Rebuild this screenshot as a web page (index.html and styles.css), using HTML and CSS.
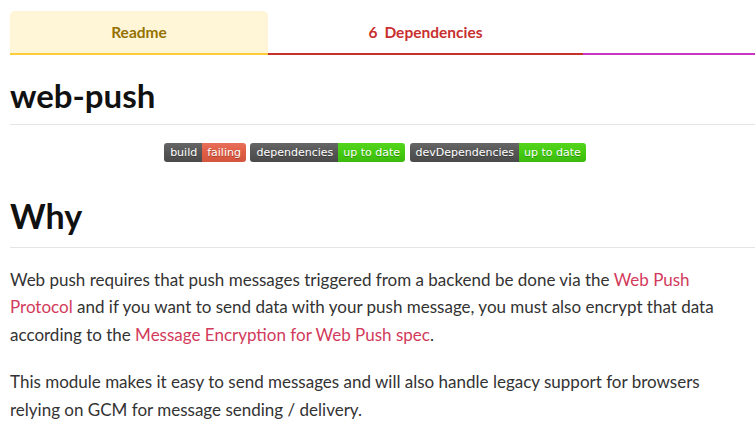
FILE: index.html
```html
<!DOCTYPE html>
<html>
<head>
<meta charset="utf-8">
<link rel="stylesheet" href="styles.css">
</head>
<body>
<div class="page">
  <nav class="tabs">
    <div class="tab tab-readme">Readme</div>
    <div class="tab tab-deps"><span class="count">6</span>Dependencies</div>
    <div class="tab tab-dependents"></div>
  </nav>
  <h1 class="title">web-push</h1>
  <div class="badges">
    <span class="badge"><span class="b-l">build</span><span class="b-r red">failing</span></span>
    <span class="badge"><span class="b-l">dependencies</span><span class="b-r green">up to date</span></span>
    <span class="badge"><span class="b-l">devDependencies</span><span class="b-r green">up to date</span></span>
  </div>
  <h2 class="section">Why</h2>
  <p class="text">Web push requires that push messages triggered from a backend be done via the <a href="#">Web Push Protocol</a> and if you want to send data with your push message, you must also encrypt that data according to the <a href="#">Message Encryption for Web Push spec</a>.</p>
  <p class="text">This module makes it easy to send messages and will also handle legacy support for browsers relying on GCM for message sending / delivery.</p>
</div>
</body>
</html>
```
FILE: styles.css
```css
html, body { margin: 0; padding: 0; background: #fff; }
body { font-family: "Source Sans Pro", "Lato", "Liberation Sans", sans-serif; color: #333; }
.page { padding: 0 0 0 10px; }
.tabs { display: flex; margin-top: 11px; }
.tab { height: 42px; display: flex; align-items: center; justify-content: center; font-size: 15.5px; font-weight: 700; border-bottom: 2px solid; }
.tab-readme { width: 258px; background: #fef6d7; border-color: #fdcd3a; color: #957100; border-radius: 5px 5px 0 0; }
.tab-deps { width: 315px; border-color: #c8302f; color: #c8302f; }
.tab-deps .count { margin-right: 7px; }
.tab-dependents { flex: 1; border-color: #c836c3; }
.title { font-size: 33px; font-weight: 700; color: #111; margin: 0; padding: 22px 0 11px; line-height: 1.1; border-bottom: 1px solid #e5e5e5; }
.badges { display: flex; justify-content: center; gap: 4.5px; margin: 18px 0 0; padding-right: 15px; }
.badge { display: inline-flex; height: 19px; border-radius: 3px; overflow: hidden; font-family: "DejaVu Sans", Verdana, sans-serif; font-size: 11px; color: #fff; line-height: 19px; text-shadow: 0 1px 0 rgba(1,1,1,0.3); }
.b-l { background: linear-gradient(#666, #555 50%, #4a4a4a); padding: 0 5px 0 6px; }
.b-r { padding: 0 5px; }
.b-r.red { background: linear-gradient(#e8705a, #e05d44 50%, #d2553d); }
.b-r.green { background: linear-gradient(#55d41c, #44cc11 50%, #3cb90e); }
.section { font-size: 34px; font-weight: 700; color: #111; margin: 0 0 18px; padding: 35px 0 12px; line-height: 1.1; border-bottom: 1px solid #e5e5e5; }
.text { font-size: 17px; line-height: 27.5px; margin: 0 0 20px; padding-right: 10px; color: #333; }
.text a { color: #d23a5b; text-decoration: none; }
```
